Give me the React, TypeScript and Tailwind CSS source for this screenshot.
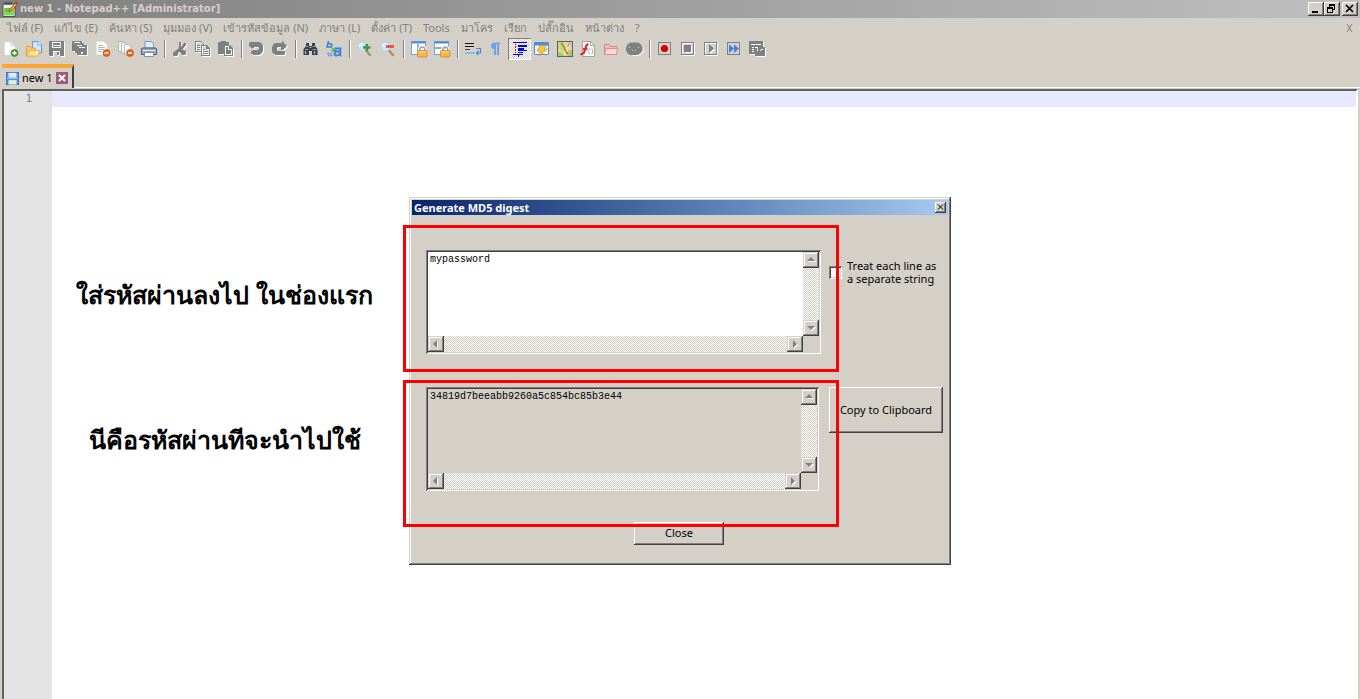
import type { ReactNode } from 'react';

const UI_FONT = "font-['Noto_Sans','Open_Sans',sans-serif] text-[11px]";
const RAISED = 'bg-[#d4d0c8] shadow-[inset_-1px_-1px_#404040,inset_1px_1px_#fff,inset_-2px_-2px_#808080]';
const SCROLL_BUTTON =
  'flex h-4 w-4 shrink-0 items-center justify-center bg-[#d4d0c8] shadow-[inset_-1px_-1px_#404040,inset_1px_1px_#d4d0c8,inset_-2px_-2px_#808080,inset_2px_2px_#fff]';
const SUNKEN =
  'shadow-[inset_1px_1px_#808080,inset_-1px_-1px_#fff,inset_2px_2px_#404040,inset_-2px_-2px_#d4d0c8]';
const DITHER = 'bg-[repeating-conic-gradient(#fff_0_25%,#d4d0c8_0_50%)] bg-[length:2px_2px]';

const MENU = [
  'ไฟล์ (F)',
  'แก้ไข (E)',
  'ค้นหา (S)',
  'มุมมอง (V)',
  'เข้ารหัสข้อมูล (N)',
  'ภาษา (L)',
  'ตั้งค่า (T)',
  'Tools',
  'มาโคร',
  'เรียก',
  'ปลั๊กอิน',
  'หน้าต่าง',
  '?',
];

function Icon({ children, size = 16 }: { children: ReactNode; size?: number }) {
  return (
    <svg
      width={size}
      height={size}
      viewBox="0 0 16 16"
      fill="none"
      aria-hidden="true"
      className="block shrink-0 overflow-visible"
    >
      {children}
    </svg>
  );
}

// Greyed-out glyph with the classic white emboss one pixel down and right
function Embossed({ children }: { children: ReactNode }) {
  return (
    <Icon>
      <g transform="translate(1 1)" fill="#fff">{children}</g>
      <g fill="#808080">{children}</g>
    </Icon>
  );
}

function Minus({ x, y }: { x: number; y: number }) {
  return (
    <>
      <circle cx={x} cy={y} r="3.5" fill="#e8641b" stroke="#c84a10" strokeWidth="0.6" />
      <path d={`M${x - 2} ${y}h4`} stroke="#fff" strokeWidth="1.4" />
    </>
  );
}

function Lens({ children }: { children: ReactNode }) {
  return (
    <Icon>
      <path d="M9.5 10l3.500 4" stroke="#b98a58" strokeWidth="2.4" strokeLinecap="round" />
      <circle cx="5.500" cy="5.500" r="4.500" fill="#cfe6fa" stroke="#b4d2f0" strokeWidth="1.2" />
      <path d="M2.500 5.500a3 3 0 0 1 3-2.600" stroke="#fff" strokeWidth="1.4" />
      {children}
    </Icon>
  );
}

function Lock() {
  return (
    <>
      <path d="M8.500 10V8a2.800 2.800 0 0 1 5.500 0v2" stroke="#fff" strokeWidth="3" />
      <path d="M8.800 10V8a2.600 2.600 0 0 1 5 0v2" stroke="#9d9d9d" strokeWidth="1.5" />
      <rect x="6.500" y="9.500" width="9.500" height="6.500" rx="0.800" fill="#f2b548" stroke="#cf8d24" strokeWidth="0.8" />
      <path d="M7.500 11h7.500" stroke="#fbdc90" />
    </>
  );
}

const ICONS: Record<string, ReactNode> = {
  New: (
    <Icon>
      <path d="M1.5 1h6.5l4 4v9h-10.5z" fill="#fff" stroke="#d8dde3" strokeWidth="0.8" />
      <path d="M8 1v4h4" fill="#e6eaf0" stroke="#c4cad2" strokeWidth="0.7" />
      <circle cx="11.500" cy="12" r="3.4" fill="#4fa53c" stroke="#2f7a24" strokeWidth="0.7" />
      <path d="M9.500 12h4M11.500 10v4" stroke="#fff" strokeWidth="1.3" />
    </Icon>
  ),
  Open: (
    <Icon>
      <path d="M6.5 0.5h5.5l3.5 3.5v8h-9z" fill="#d5e8fb" stroke="#5b9be0" />
      <path d="M12 0.5v3.5h3.5" fill="#fff" stroke="#5b9be0" strokeWidth="0.8" />
      <path d="M0.5 15V5.5h4l1 1.5h4v8z" fill="#f6c767" stroke="#e8a33a" />
      <path d="M1 15l2-5.5h11L12 15z" fill="#fbe3a4" stroke="#eab04c" />
    </Icon>
  ),
  Save: (
    <Embossed>
      <path fillRule="evenodd" d="M0 0h15v15H1L0 14zM3 1v6h9V1zM4 10v5h7v-5zM8 11h2v3H8zM4 2h7v2H4zM4 5h7v1H4z" />
    </Embossed>
  ),
  'Save all': (
    <Embossed>
      <path fillRule="evenodd" d="M0 0h10v2h2v2h3v10H5v-2H3v-2H0zM2 1v1h6V1zM5 4v1h5V4zM7 6v1h6V6zM9 11v2h2v-2z" />
    </Embossed>
  ),
  Close: (
    <Icon>
      <path d="M1.500 0.500h7l3.500 3.500v9.500h-10.500z" fill="#fff" stroke="#e2e4e8" strokeWidth="0.8" />
      <path d="M3 4.500h5M3 6.500h7M3 8.500h6M3 10.500h4" stroke="#b4b4b4" />
      <Minus x={11.5} y={12} />
    </Icon>
  ),
  'Close all': (
    <Icon>
      <path d="M0.500 0.500h5l2 2v8h-7z" fill="#f3f3f3" stroke="#a8a8a8" strokeWidth="0.8" />
      <path d="M3.500 2h5l2 2v8h-7z" fill="#f8f8f8" stroke="#a8a8a8" strokeWidth="0.8" />
      <path d="M6.500 3.500h4l2.500 2.500v8H6.500z" fill="#fff" stroke="#a8a8a8" strokeWidth="0.8" />
      <Minus x={12} y={12} />
    </Icon>
  ),
  Print: (
    <Icon>
      <path d="M4 7V0.500h6l2.500 2.500V7z" fill="#e2effc" stroke="#5d92cf" strokeWidth="0.9" />
      <path d="M1 7h14l0.700 2v4.500H0.300V9z" fill="#9aa5b3" stroke="#4b5663" strokeWidth="0.9" />
      <path d="M1.500 9.500h13" stroke="#dbe2ea" strokeWidth="1.3" />
      <path d="M3.500 11.500h9V15.500h-9z" fill="#fff" stroke="#5b7fae" strokeWidth="0.8" />
    </Icon>
  ),
  Cut: (
    <Embossed>
      <path d="M7 1h2v5l3-4h2v2l-3.500 4.500L14 10v3l-1 1h-3l-1-2-2-1-1 1v2l-1.500 1H2l-1-1v-2l2-2 3-2 1-2z" />
    </Embossed>
  ),
  Copy: (
    <Embossed>
      <path fillRule="evenodd" d="M0 0h6l3 3v1h3l3 3v8H6v-4H0zM1 1v9h5V4h2V3L6 1zM7 5v9h7V8h-3V5zM2 4h3v1H2zM2 6h3v1H2zM2 8h3v1H2zM8 8h2v1H8zM8 10h5v1H8zM8 12h5v1H8z" />
    </Embossed>
  ),
  Paste: (
    <Embossed>
      <path fillRule="evenodd" d="M0 1h3V0h5v1h3v3h1l3 3v8H6v-2H0zM7 5v9h7V8h-3V5z" />
      <path d="M8 6h2v3h3v4H8z" />
    </Embossed>
  ),
  Undo: (
    <Embossed>
      <path d="M1 1h9l3 1.500L14 5v5l-1.500 2.500L10 14H4v-1H2v-2.500L4 9h5l1-1V6.500L9 6H5v1.500H3L0 5V2.500z" />
    </Embossed>
  ),
  Redo: (
    <Embossed>
      <path d="M12 0v2l2.500 2v1.500L11 9H9V6H6L5 7v2l1 1h7v3l-1 1H4l-3-1.500L0 10V6l1.500-3L4 2h6V1z" />
    </Embossed>
  ),
  Find: (
    <Icon>
      <path d="M3 2h3v3h3V2h3v3l2.500 3v6H9v-4H6v4H0.500V8L3 5z" fill="#38404c" />
      <path d="M2 8.500h3.500M9.500 8.500h4M3 5.500h2.500M9.500 5.500h2.500" stroke="#8d99aa" />
      <path d="M2.500 10v3M11.500 10v3M6.500 6.500h2" stroke="#aab6c6" strokeWidth="1.2" />
    </Icon>
  ),
  Replace: (
    <Icon>
      <path d="M2.500 0L1 6h3.500L6 4 5 2.800H2.500" stroke="#3a82dc" strokeWidth="1.6" />
      <path d="M5 6l4 3.500M9.500 6.500v3.500h-4" stroke="#57a84c" strokeWidth="1.5" />
      <path d="M9 7.500h5.500l-0.500 5.500q0 2 1.500 1.500M14 10.500h-4q-2 1.500-1 3.500 3 1.500 5-1.500" stroke="#3a82dc" strokeWidth="2" />
      <path d="M1 12.500h5M2 14.500h5" stroke="#6ba8ee" strokeWidth="1.5" />
    </Icon>
  ),
  'Zoom in': (
    <Lens>
      <path d="M6 6.500h7.500M9.800 3v7" stroke="#3c9a42" strokeWidth="2.6" />
    </Lens>
  ),
  'Zoom out': (
    <Lens>
      <path d="M6 5.500h8" stroke="#ee4c48" strokeWidth="2.8" />
    </Lens>
  ),
  'Sync vertical': (
    <Icon>
      <rect x="0.500" y="0.500" width="14" height="13" fill="#fff" stroke="#70a4dc" />
      <path d="M0.500 1.500h14" stroke="#4e8cd0" strokeWidth="2" />
      <path d="M6 3h2v10H6z" fill="#7fb0e4" />
      <Lock />
    </Icon>
  ),
  'Sync horizontal': (
    <Icon>
      <rect x="0.500" y="0.500" width="14" height="13" fill="#fff" stroke="#70a4dc" />
      <path d="M0.500 1.500h14" stroke="#4e8cd0" strokeWidth="2" />
      <path d="M1 7h13" stroke="#7fb0e4" strokeWidth="2" />
      <Lock />
    </Icon>
  ),
  'Word wrap': (
    <Icon>
      <path d="M0 2.500h9M0 5.500h9" stroke="#111" />
      <path d="M0 8.500h5" stroke="#444" />
      <path d="M0 12h10" stroke="#8db8ee" strokeWidth="2" />
      <path d="M11 7.500h4.500v4.500H12M13.500 9.800L11.500 12l2 2.200" stroke="#4a86d0" strokeWidth="1.2" />
    </Icon>
  ),
  'All characters': (
    <Icon>
      <path d="M3 4.500A3.200 3.200 0 0 1 6.500 1.500h5.500V3h-1v11H9V3H8v11H6V8A3.200 3.200 0 0 1 3 4.500z" fill="#6ba4e6" />
    </Icon>
  ),
  'Indent guide': (
    <Icon>
      <path d="M2 1h14v1H2zM7 4h9v2H7zM7 7h6v2H7zM7 9h9v1H7zM7 11h5v1H7zM2 13h10v1H2zM7 14h1v2H7z" fill="#00f" />
      <path d="M4 3h1v1H4zM4 5h1v2H4zM4 8h1v2H4zM4 11h1v1H4z" fill="#f00" />
    </Icon>
  ),
  'User language': (
    <Icon>
      <rect x="0.500" y="1.500" width="14" height="12" rx="0.500" fill="#eef6ff" stroke="#4a8fe0" />
      <path d="M0.500 3h14" stroke="#4a8fe0" strokeWidth="3" />
      <path d="M6 4.500h6.500L10 8h3.500L5 15l1.500-5H3z" fill="#fbc63b" stroke="#d68d18" strokeWidth="0.7" />
    </Icon>
  ),
  'Document map': (
    <Icon>
      <rect x="0.500" y="0.500" width="15" height="15" fill="#ecd97c" stroke="#62605a" />
      <path d="M1 1h6l2 7-3 2-5-3z" fill="#b6dd8c" />
      <path d="M10 1h5v7z" fill="#a9cdec" />
      <path d="M1 11l5 1 2 3H1zM12 9h3v6h-5z" fill="#9ccf74" />
      <path d="M13.500 2L9 9l-2 5" stroke="#f3eec0" strokeWidth="1.600" />
      <path d="M4 2l3 4 2 5 2 2" stroke="#d9472f" strokeWidth="1.200" />
      <path d="M13 2l-2.500 4" stroke="#e0664a" />
    </Icon>
  ),
  'Function list': (
    <Icon>
      <path d="M2.500 0.500h8l4 4v11h-12z" fill="#fbfbfb" stroke="#9b9b9b" strokeWidth="0.9" />
      <path d="M10.500 0.500v4h4" stroke="#9b9b9b" strokeWidth="0.9" />
      <path d="M8.500 3.500C6 3 6 6 5 9s-1.500 4.500-4.500 4M3 8h4.500" stroke="#d92c34" strokeWidth="2.2" />
      <path
        d="M10 7.500c-1.500 0-.5 2-1.500 2.800 1 .700 0 2.700 1.500 2.700M11.500 7.500c1.500 0 .5 2 1.500 2.800-1 .700 0 2.700-1.500 2.700"
        stroke="#999"
        strokeWidth="0.8"
      />
    </Icon>
  ),
  Folder: (
    <Icon>
      <path d="M1.500 13.500v-10h4.500l1.500 2h6v8z" fill="#f1b9bb" stroke="#d9868b" />
      <path d="M1.500 13.500l1.500-6h11.500l-1 6z" fill="#f8d8d8" stroke="#dc8f93" />
    </Icon>
  ),
  Monitoring: (
    <Icon>
      <path d="M5 3h8l3 2 1.500 3v3L15 13.500 12 15H6z" fill="#fff" />
      <path d="M4 1.500h8l3 2 1.500 3v3l-2 3-3 1.500h-7l-3-1.500L0 9.500v-3l1.500-3z" fill="#808080" />
      <path d="M3 6h1v1H3zM12 6h1v1h-1zM6 9h1v1H6zM9 9h1v1H9z" fill="#d4d0c8" />
    </Icon>
  ),
  Record: (
    <Icon>
      <rect x="1.500" y="1.500" width="12" height="12" stroke="#808080" />
      <circle cx="7.500" cy="7.500" r="3.600" fill="#d00000" />
    </Icon>
  ),
  Stop: (
    <Icon>
      <path d="M14.500 2v12.500H2M2.500 13V2.500H13" stroke="#fff" />
      <rect x="1.500" y="1.500" width="12" height="12" stroke="#808080" />
      <path d="M5 5h7v7H5z" fill="#fff" />
      <path d="M4 4h7v7H4z" fill="#808080" />
    </Icon>
  ),
  Play: (
    <Icon>
      <path d="M14.500 2v12.500H2M2.500 13V2.500H13" stroke="#fff" />
      <rect x="1.500" y="1.500" width="12" height="12" stroke="#808080" />
      <path d="M7 4l5 4.500L7 13z" fill="#fff" />
      <path d="M6 3l5 4.500L6 12z" fill="#808080" />
    </Icon>
  ),
  'Play multiple': (
    <Icon>
      <rect x="1.500" y="1.500" width="12" height="12" fill="#d4d0c8" stroke="#808080" />
      <path d="M3 3.500l5 4-5 4.500zM8 3.500l5 4-5 4.500z" fill="#3f82e0" />
    </Icon>
  ),
  'Save macro': (
    <Embossed>
      <path
        fillRule="evenodd"
        d="M0 0h14v6h2v9H6v-2H0zM2 3h10v1H2zM3 6h2v1H3zM6 6h3v1H6zM3 8h2v1H3zM3 10h2v1H3zM8 7h1v3h2V9h3V8h-2v2H8z"
      />
    </Embossed>
  ),
};

const TOOLBAR = [
  ['New', 'Open', 'Save', 'Save all', 'Close', 'Close all', 'Print'],
  ['Cut', 'Copy', 'Paste'],
  ['Undo', 'Redo'],
  ['Find', 'Replace'],
  ['Zoom in', 'Zoom out'],
  ['Sync vertical', 'Sync horizontal'],
  ['Word wrap', 'All characters', 'Indent guide', 'User language', 'Document map', 'Function list', 'Folder', 'Monitoring'],
  ['Record', 'Stop', 'Play', 'Play multiple', 'Save macro'],
];

function TitleBar() {
  return (
    <header className="flex h-[18px] items-center bg-gradient-to-r from-[#808080] to-[#c0c0c0] px-[2px]">
      <Icon>
        <path d="M1 3h12v12.500H1z" fill="#f4f7ee" stroke="#444" strokeWidth="0.9" />
        <path d="M2 7h10v7.500H2z" fill="#7ed957" />
        <path d="M3 1v3M5 1v3M7 1v3M9 1v3" stroke="#333" strokeWidth="0.9" />
        <path d="M3 8h7M3 10h5" stroke="#4aa52e" strokeWidth="0.8" />
        <path d="M7 11l1-3 5-6 2 1.500-5 6z" fill="#f5a623" stroke="#7a4a10" strokeWidth="0.7" />
        <path d="M13 2l1-1.500 2 1.500-1 1.500z" fill="#d22" />
      </Icon>
      <h1 className="flex-1 pl-[2px] font-['DejaVu_Sans',sans-serif] text-[10px] font-bold leading-[18px] text-[#d4d0c8]">
        new 1 - Notepad++ [Administrator]
      </h1>
      <div className="flex text-black">
        <button type="button" aria-label="Minimize" className={`h-[14px] w-4 ${RAISED}`}>
          <svg width="16" height="14" shapeRendering="crispEdges">
            <path d="M4 9h6v2H4z" />
          </svg>
        </button>
        <button type="button" aria-label="Restore" className={`mr-[2px] h-[14px] w-4 ${RAISED}`}>
          <svg width="16" height="14" shapeRendering="crispEdges" fill="none" stroke="#000">
            <path d="M5.500 5V2.500h5v5H9M5 3h6" />
            <path d="M3.500 6.500h5v4h-5zM3 5.500h6" />
          </svg>
        </button>
        <button type="button" aria-label="Close window" className={`h-[14px] w-4 ${RAISED}`}>
          <svg width="16" height="14" stroke="#000" strokeWidth="1.700">
            <path d="M4 3l7 7M11 3l-7 7" />
          </svg>
        </button>
      </div>
    </header>
  );
}

function MenuBar() {
  return (
    <nav className="flex h-5 items-center pl-[7px] pr-[6px] text-[#808080]">
      <div className="flex flex-1 gap-[11px]">
        {MENU.map((label) => (
          <button key={label} type="button" className="whitespace-nowrap leading-5">
            {label}
          </button>
        ))}
      </div>
      <button type="button" aria-label="Close document">
        <svg width="8" height="10" stroke="#808080" fill="none">
          <path d="M1 1l5 8M6 1l-5 8" />
        </svg>
      </button>
    </nav>
  );
}

function ToolBar() {
  return (
    <div role="toolbar" className="flex h-[22px] items-center">
      {TOOLBAR.map((group, i) => (
        <div key={group[0]} className="flex items-center">
          {i > 0 && <span className="mx-[3px] h-[18px] w-[2px] border-l border-r border-l-[#808080] border-r-white" />}
          {group.map((name) => (
            <button
              key={name}
              type="button"
              aria-label={name}
              className={`flex h-[22px] w-[23px] items-center pl-[3px] ${
                name === 'Indent guide' ? `${DITHER} shadow-[inset_1px_1px_#808080,inset_-1px_-1px_#fff]` : ''
              }`}
            >
              {ICONS[name]}
            </button>
          ))}
        </div>
      ))}
    </div>
  );
}

function Tabs() {
  return (
    <div className="mt-1 flex h-6 items-stretch pl-[2px]">
      <div className="flex items-center border-r-2 border-t-4 border-r-[#404040] border-t-[#faa634] px-1 text-black">
        <Icon size={13}>
          <rect x="0.500" y="0.500" width="15" height="15" fill="#4d93e6" stroke="#2a6cc0" />
          <path d="M3 1h10v6H3z" fill="#dcebfb" />
          <path d="M3 10h10v5.500H3z" fill="#dff0d0" />
          <path d="M1 8h14" stroke="#9cc6f5" />
        </Icon>
        <span className="px-[3px]">new 1</span>
        <button type="button" aria-label="Close tab" className="bg-[#9b5a78] p-[2px]">
          <svg width="8" height="8" stroke="#fff" strokeWidth="2" className="block">
            <path d="M1 1l6 6M7 1l-6 6" />
          </svg>
        </button>
      </div>
      <div className="flex-1 border-b border-white" />
    </div>
  );
}

const ARROWS = {
  up: 'M0 5L4 1l4 4z',
  down: 'M0 2h8L4 6z',
  left: 'M5 0v8L1 4z',
  right: 'M2 0v8l4-4z',
};

function ScrollButton({ dir }: { dir: keyof typeof ARROWS }) {
  return (
    <button type="button" aria-label={`Scroll ${dir}`} className={SCROLL_BUTTON}>
      <svg width="9" height="9">
        <path d={ARROWS[dir]} fill="#fff" transform="translate(1 1)" />
        <path d={ARROWS[dir]} fill="#808080" />
      </svg>
    </button>
  );
}

interface ScrollBoxProps {
  label: string;
  value: string;
  readOnly?: boolean;
}

function ScrollBox({ label, value, readOnly }: ScrollBoxProps) {
  return (
    <div className={`flex h-[104px] flex-col p-[2px] ${SUNKEN}`}>
      <div className="flex flex-1">
        <textarea
          aria-label={label}
          defaultValue={value}
          readOnly={readOnly}
          spellCheck={false}
          wrap="off"
          className={`block flex-1 resize-none overflow-hidden p-[2px] font-['Liberation_Mono',monospace] text-[10px] leading-3 text-black outline-none ${
            readOnly ? 'bg-[#d4d0c8]' : 'bg-white'
          }`}
        />
        <div className={`flex w-4 flex-col justify-between ${DITHER}`}>
          <ScrollButton dir="up" />
          <ScrollButton dir="down" />
        </div>
      </div>
      <div className="flex">
        <div className={`flex flex-1 justify-between ${DITHER}`}>
          <ScrollButton dir="left" />
          <ScrollButton dir="right" />
        </div>
        <span className="w-4" />
      </div>
    </div>
  );
}

function DigestDialog() {
  return (
    <section
      aria-label="Generate MD5 digest"
      className="bg-[#d4d0c8] p-[3px] pb-[2px] text-black shadow-[inset_-1px_-1px_#404040,inset_1px_1px_#d4d0c8,inset_-2px_-2px_#808080,inset_2px_2px_#fff]"
    >
      <div className="flex h-[15px] items-center bg-gradient-to-r from-[#0a246a] to-[#a6caf0] px-[2px]">
        <h2 className="flex-1 font-bold leading-[15px] text-white">Generate MD5 digest</h2>
        <button type="button" aria-label="Close dialog" className={`h-[11px] w-[11px] ${RAISED}`}>
          <svg width="11" height="11" stroke="#000" className="block">
            <path d="M3 2.500l5 5M8 2.500l-5 5" />
          </svg>
        </button>
      </div>
      <div className="grid grid-cols-[395px_1fr] gap-x-2 gap-y-[33px] pl-[14px] pr-[5px] pt-[35px]">
        <ScrollBox label="Text" value="mypassword" />
        <label className="mt-[9px] flex items-center gap-[5px] self-start leading-[13px]">
          <input
            type="checkbox"
            className={`h-[13px] w-[13px] shrink-0 appearance-none bg-white ${SUNKEN}`}
          />
          <span className="whitespace-nowrap">
            Treat each line as
            <br />a separate string
          </span>
        </label>
        <div className="pr-[2px]">
          <ScrollBox label="Digest" value="34819d7beeabb9260a5c854bc85b3e44" readOnly />
        </div>
        <button type="button" className={`h-[46px] whitespace-nowrap ${RAISED}`}>
          Copy to Clipboard
        </button>
      </div>
      <div className="flex justify-center pb-[18px] pr-[2px] pt-[31px]">
        <button type="button" className={`h-[23px] w-[90px] ${RAISED}`}>
          Close
        </button>
      </div>
    </section>
  );
}

function Note({ children }: { children: ReactNode }) {
  return <p className="h-[145px] whitespace-nowrap text-center text-[25px] font-bold leading-9">{children}</p>;
}

function Editor() {
  return (
    <main className="relative mx-[2px] mt-px flex flex-1 border-l-2 border-r-2 border-t-2 border-l-[#606060] border-r-white border-t-[#606060] bg-white">
      <div className="w-12 bg-[#e4e4e4] pr-5 text-right font-['DejaVu_Sans_Mono',monospace] text-[11px] leading-4 text-[#808080]">
        1
      </div>
      <textarea
        aria-label="new 1"
        spellCheck={false}
        className="block flex-1 resize-none bg-[linear-gradient(#e8e8ff,#e8e8ff)] bg-[length:100%_16px] bg-no-repeat font-['Liberation_Mono',monospace] text-[13px] leading-4 outline-none"
      />

      {/* Floating dialog with its notes and highlight frames */}
      <div className="absolute left-1/2 top-[106px] w-[542px] -translate-x-1/2">
        <DigestDialog />
        <div className="absolute right-full top-[79px] mr-9 text-black">
          <Note>ใส่รหัสผ่านลงไป ในช่องแรก</Note>
          <Note>นีคือรหัสผ่านทีจะนำไปใช้</Note>
        </div>
        <div className="pointer-events-none absolute -left-[6px] top-7 flex w-[436px] flex-col gap-2">
          <div className="h-[147px] border-[3px] border-[#f00]" />
          <div className="h-[147px] border-[3px] border-[#f00]" />
        </div>
      </div>
    </main>
  );
}

export default function App() {
  return (
    <div className={`flex min-h-screen flex-col overflow-hidden bg-[#d4d0c8] ${UI_FONT}`}>
      <TitleBar />
      <MenuBar />
      <ToolBar />
      <Tabs />
      <Editor />
    </div>
  );
}
